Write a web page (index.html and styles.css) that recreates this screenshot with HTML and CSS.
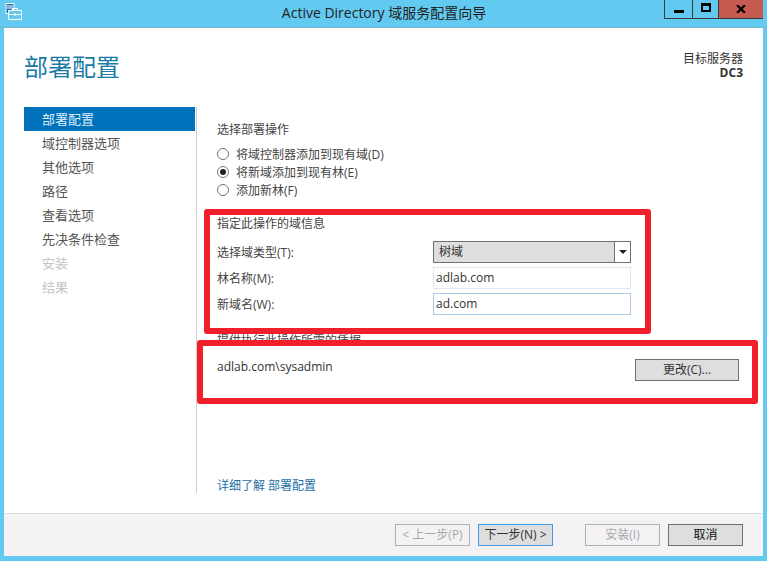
FILE: index.html

```html
<!DOCTYPE html>
<html lang="zh-CN">
<head>
  <meta charset="UTF-8" />
  <title>Active Directory 域服务配置向导</title>
  <link rel="stylesheet" href="styles.css">
</head>
<body>
  <div class="window">
    <div class="titlebar">
      <svg class="app-icon" width="17" height="17" viewBox="0 0 17 17">
        <path d="M1 .5h8v6H7v4H1z" fill="#1a6fb5" stroke="#fff"/>
        <path d="M2 3h6M2 5h6" stroke="#fff"/>
        <path d="M3.500 7.500h13v9h-13z" fill="#62c9f0" stroke="#fff"/>
        <path d="M3.500 11.500h13" stroke="#fff"/>
        <path d="M7.500 7V5.500h5V7" fill="none" stroke="#fff"/>
        <path d="M9 10.500h2v2H9z" fill="#fff"/>
      </svg>
      <div class="title">Active Directory 域服务配置向导</div>
      <div class="controls">
        <div class="ctl ctl-min"><span class="glyph-min"></span></div>
        <div class="ctl ctl-max"><span class="glyph-max"></span></div>
        <div class="ctl ctl-close">
          <svg width="10" height="8" viewBox="0 0 10 8"><path d="M1 0l8 8M9 0L1 8" stroke="#000" stroke-width="2.200" fill="none"/></svg>
        </div>
      </div>
    </div>

    <div class="client">
      <div class="header">
        <h1>部署配置</h1>
        <div class="server">
          <div>目标服务器</div>
          <div class="server-name">DC3</div>
        </div>
      </div>

      <div class="body">
        <ul class="nav">
          <li class="active">部署配置</li>
          <li>域控制器选项</li>
          <li>其他选项</li>
          <li>路径</li>
          <li>查看选项</li>
          <li>先决条件检查</li>
          <li class="disabled">安装</li>
          <li class="disabled">结果</li>
        </ul>

        <div class="main">
          <div class="section-title">选择部署操作</div>
          <div class="radios">
            <div class="radio-row"><span class="radio"></span>将域控制器添加到现有域(D)</div>
            <div class="radio-row"><span class="radio checked"></span>将新域添加到现有林(E)</div>
            <div class="radio-row"><span class="radio"></span>添加新林(F)</div>
          </div>

          <div class="section-title domain-title">指定此操作的域信息</div>
          <div class="fields">
            <label>选择域类型(T):</label>
            <div class="combo"><span class="combo-text">树域</span><span class="combo-btn"></span></div>
            <label>林名称(M):</label>
            <div class="input">adlab.com</div>
            <label>新域名(W):</label>
            <div class="input focus">ad.com</div>
          </div>

          <div class="section-title cred-title">提供执行此操作所需的凭据</div>
          <div class="cred-row">
            <span>adlab.com\sysadmin</span>
            <div class="btn change">更改(C)...</div>
          </div>

          <a class="more">详细了解 部署配置</a>
        </div>
      </div>

      <div class="footer">
        <div class="btn off">&lt; 上一步(P)</div>
        <div class="btn next">下一步(N) &gt;</div>
        <div class="btn off install">安装(I)</div>
        <div class="btn cancel">取消</div>
      </div>
    </div>
  </div>

  <div class="mark mark-domain"></div>
  <div class="mark mark-cred"></div>
</body>
</html>
```

FILE: styles.css

```css
* { box-sizing: border-box; }
html, body { margin: 0; height: 100%; }
body {
  position: relative;
  overflow: hidden;
  font-family: "Open Sans", "Noto Sans CJK SC", sans-serif;
  font-size: 12px;
  color: #444;
  background: #62c9f0;
}
.window { display: flex; flex-direction: column; height: 561px; }

/* title bar */
.titlebar {
  height: 28px;
  flex: none;
  position: relative;
  display: flex;
  justify-content: center;
  border-bottom: 1px solid #7fb6cf;
}
.app-icon { position: absolute; left: 5px; top: 3px; }
.title { font-size: 14px; line-height: 26px; color: #222; margin-left: 1px; }
.controls { position: absolute; right: 4px; top: 0; display: flex; height: 19px; }
.ctl {
  height: 19px;
  border: 1px solid #3f3a3a;
  border-top: none;
  margin-left: -1px;
  display: flex;
  align-items: center;
  justify-content: center;
}
.ctl-min { width: 29px; }
.ctl-max { width: 27px; }
.ctl-close { width: 45px; background: #c75a50; border-right: none; }
.glyph-min { width: 10px; height: 3px; background: #000; margin-top: 5px; }
.glyph-max { width: 10px; height: 9px; border: 2px solid #000; border-top-width: 3px; margin-top: -3px; }

/* white client area */
.client {
  flex: none;
  height: 528px;
  margin: 0 4px;
  background: #fff;
  display: flex;
  flex-direction: column;
}
.header {
  height: 79px;
  flex: none;
  padding: 0 20px;
  display: flex;
  justify-content: space-between;
}
h1 {
  margin: 22px 0 0;
  font-size: 24px;
  font-weight: 400;
  line-height: 34px;
  color: #1a7ba6;
}
.server { margin-top: 24px; text-align: right; line-height: 14px; color: #333; font-size: 12px; }
.server-name { font-weight: 700; }

.body { flex: 1; display: flex; min-height: 0; }
.nav {
  list-style: none;
  margin: 0 0 20px 20px;
  padding: 0;
  width: 173px;
  border-right: 1px solid #d0d0d0;
  font-size: 13px;
}
.nav li { height: 24px; line-height: 24px; padding-left: 18px; color: #555; margin-right: 1px; }
.nav .active { background: #0072bc; color: #d8ecf8; }
.nav .disabled { color: #c4c4c4; }

.main { flex: 1; padding: 14px 0 0 20px; position: relative; }
.section-title { line-height: 18px; color: #444; }
.radios { margin-top: 6px; }
.radio-row { display: flex; align-items: center; height: 18px; }
.radio {
  width: 12px;
  height: 12px;
  margin-right: 7px;
  border: 1px solid #777;
  border-radius: 50%;
  display: flex;
  align-items: center;
  justify-content: center;
}
.radio.checked::after {
  content: "";
  width: 6px;
  height: 6px;
  border-radius: 50%;
  background: #222;
}
.domain-title { margin-top: 16px; }
.fields {
  margin-top: 8px;
  width: 414px;
  display: grid;
  grid-template-columns: 216px 198px;
  grid-auto-rows: 22px;
  row-gap: 4px;
  align-items: center;
}
.combo {
  height: 22px;
  display: flex;
  border: 1px solid #707070;
  background: #dedede;
  color: #333;
}
.combo-text { flex: 1; line-height: 19px; padding-left: 5px; }
.combo-btn {
  width: 16px;
  border-left: 1px solid #707070;
  background: #fff;
  display: flex;
  align-items: center;
  justify-content: center;
}
.combo-btn::after {
  content: "";
  border: 4px solid transparent;
  border-top: 4px solid #222;
  border-bottom: none;
}
.input {
  height: 22px;
  border: 1px solid #e3e3ee;
  line-height: 20px;
  padding-left: 2px;
  color: #333;
}
.input.focus { border-color: #a9cbe6; }
.cred-title { margin-top: 17px; }
.cred-row {
  margin-top: 9px;
  width: 522px;
  height: 22px;
  display: flex;
  justify-content: space-between;
  align-items: flex-start;
  line-height: 16px;
  color: #333;
}
.more { position: absolute; left: 20px; bottom: 19px; color: #1a6fa8; line-height: 16px; }

.btn {
  height: 22px;
  border: 1px solid #707070;
  background: #dedede;
  text-align: center;
  line-height: 20px;
  color: #333;
}
.change { width: 104px; }

.footer {
  margin-top: auto;
  height: 43px;
  flex: none;
  border-top: 1px solid #dcdcdc;
  background: #f5f2f6;
  padding: 10px 20px 0 0;
  display: flex;
  justify-content: flex-end;
  gap: 8px;
}
.footer .btn { width: 75px; }
.footer .off { background: #f5f2f6; border-color: #b0b0b0; color: #a8a8a8; }
.footer .next { border-color: #3d9be9; }
.footer .install { margin-left: 24px; }
.footer .cancel { color: #111; }

/* red annotation boxes drawn over the screenshot */
.mark {
  position: absolute;
  border: 6px solid #f01f2b;
  border-radius: 3px;
}
.mark-domain { left: 204px; top: 209px; width: 447px; height: 125px; }
.mark-cred { left: 197px; top: 340px; width: 561px; height: 64px; }
```
